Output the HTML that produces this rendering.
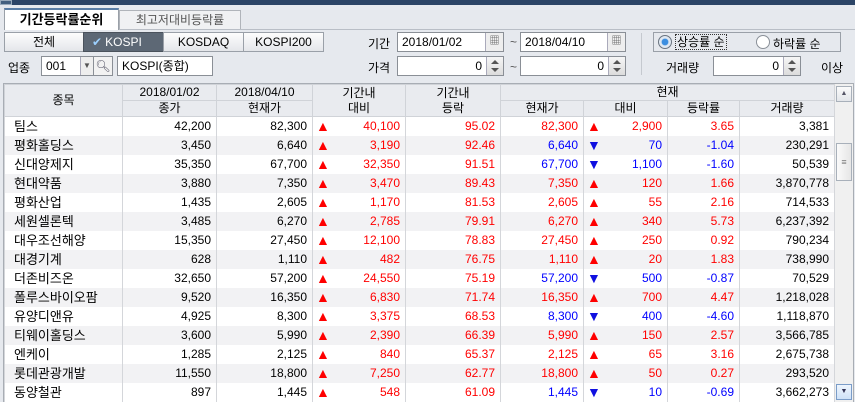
<!DOCTYPE html>
<html><head><meta charset="utf-8"><style>
*{box-sizing:border-box;margin:0;padding:0}
body{width:855px;height:402px;overflow:hidden;background:#e6e9ee;font-family:"Liberation Sans","Noto Sans CJK KR",sans-serif;font-size:12px;color:#000;position:relative}
.a{position:absolute}
.inp{position:absolute;background:#fff;border:1px solid #8a8f96;height:20px;line-height:18px;padding:0 4px}
.btn{position:absolute;top:32px;height:20px;line-height:18px;text-align:center;border:1px solid #9aa0a8;background:linear-gradient(#fdfdfd,#e4e6ea);font-size:12px}
.sp{position:absolute;width:17px;height:18px;top:0;right:0;border-left:1px solid #aab;background:linear-gradient(#f6f6f6,#dcdcdc)}
.sp:before{content:"";position:absolute;left:4px;top:3px;border:4px solid transparent;border-bottom:4px solid #555;border-top:0}
.sp:after{content:"";position:absolute;left:4px;top:11px;border:4px solid transparent;border-top:4px solid #555;border-bottom:0}
.cal{position:absolute;right:0;top:0;width:18px;height:18px;border-left:1px solid #aab;background:#eee;text-align:center;font-size:10px;color:#555;line-height:18px}
table{position:absolute;left:4px;top:84px;border-collapse:collapse;table-layout:fixed;font-size:12px}
th{background:#e9ebef;font-weight:normal;height:16px;line-height:15px;border:1px solid #d0d3d8;padding:0}
td{height:19px;line-height:19px;text-align:right;padding:0 5px 0 0;border-left:1px solid #d4d6da;border-right:1px solid #d4d6da;white-space:nowrap}
tr:nth-child(even) td{background:#f2f2f4}
tr:nth-child(odd) td{background:#fff}
td.n{text-align:left;padding-left:9px;font-size:13px}
.r{color:#f00}.b{color:#0000ff}
.u,.d{float:left;margin-left:3px;font-size:14px}
.u{color:#f00}.d{color:#1010e0}
</style></head><body>
<div class="a" style="left:0;top:0;width:855px;height:5px;background:#2b4466"></div>
<div class="a" style="left:0;top:0;width:12px;height:5px;border:1px solid #9ab;background:#44607f"></div>
<div class="a" style="left:4px;top:29px;width:851px;height:1px;background:#b9bec6"></div>
<div class="a" style="left:4px;top:8px;width:115px;height:22px;background:#fff;border:1px solid #9aa0a8;border-top:2px solid #5a7ea6;border-bottom:none;text-align:center;line-height:19px;font-weight:bold;font-size:13px">기간등락률순위</div>
<div class="a" style="left:119px;top:10px;width:122px;height:19px;background:#f0f1f3;border:1px solid #b0b4ba;border-bottom:none;text-align:center;line-height:18px;color:#555;font-size:12px">최고저대비등락률</div>

<div class="btn" style="left:4px;width:80px">전체</div>
<div class="btn" style="left:83px;width:81px;background:#5d6875;color:#fff;border-color:#4a525c"><span style="color:#9cd0ff;position:absolute;left:8px">✔</span>KOSPI</div>
<div class="btn" style="left:163px;width:81px">KOSDAQ</div>
<div class="btn" style="left:243px;width:81px">KOSPI200</div>

<div class="a" style="left:368px;top:35px">기간</div>
<div class="inp" style="left:397px;top:32px;width:107px">2018/01/02<div class="cal">▦</div></div>
<div class="a" style="left:510px;top:35px;color:#555">~</div>
<div class="inp" style="left:520px;top:32px;width:106px">2018/04/10<div class="cal">▦</div></div>
<div class="a" style="left:641px;top:33px;width:1px;height:42px;background:#c5c9cf"></div>
<div class="a" style="left:653px;top:32px;width:188px;height:20px;border:1px solid #9aa0a8"></div>
<div class="a" style="left:658px;top:35px;width:14px;height:14px;border-radius:50%;border:1px solid #6a7480;background:radial-gradient(#3b8ee0 35%,#dfe8f2 45%)"></div>
<div class="a" style="left:675px;top:34px;border:1px dotted #333;padding:0 1px;line-height:14px">상승률 순</div>
<div class="a" style="left:756px;top:35px;width:14px;height:14px;border-radius:50%;border:1px solid #8a9098;background:#fff"></div>
<div class="a" style="left:773px;top:35px">하락률 순</div>

<div class="a" style="left:8px;top:59px">업종</div>
<div class="inp" style="left:41px;top:56px;width:53px">001</div>
<div class="a" style="left:80px;top:57px;width:13px;height:18px;background:#eee;border-left:1px solid #aab;font-size:8px;text-align:center;line-height:18px;color:#555">▼</div>
<div class="a" style="left:93px;top:56px;width:20px;height:20px;border:1px solid #8a8f96;background:#f2f2f2;text-align:center;line-height:18px;color:#556">🔍︎</div>
<div class="inp" style="left:117px;top:56px;width:96px">KOSPI(종합)</div>

<div class="a" style="left:368px;top:59px">가격</div>
<div class="inp" style="left:397px;top:56px;width:107px;text-align:right;padding-right:21px">0<div class="sp"></div></div>
<div class="a" style="left:510px;top:60px;color:#555">~</div>
<div class="inp" style="left:520px;top:56px;width:106px;text-align:right;padding-right:21px">0<div class="sp"></div></div>
<div class="a" style="left:666px;top:59px">거래량</div>
<div class="inp" style="left:713px;top:56px;width:88px;text-align:right;padding-right:21px">0<div class="sp"></div></div>
<div class="a" style="left:821px;top:59px">이상</div>

<div class="a" style="left:3px;top:83px;width:851px;height:319px;border:1px solid #a8adb4;background:#fff"></div>
<table>
<colgroup><col style="width:118px"><col style="width:94px"><col style="width:96px"><col style="width:93px"><col style="width:95px"><col style="width:83px"><col style="width:84px"><col style="width:72px"><col style="width:95px"></colgroup>
<tr><th rowspan="2">종목</th><th>2018/01/02</th><th>2018/04/10</th><th rowspan="2">기간내<br>대비</th><th rowspan="2">기간내<br>등락</th><th colspan="4">현재</th></tr>
<tr><th>종가</th><th>현재가</th><th>현재가</th><th>대비</th><th>등락률</th><th>거래량</th></tr>
<tr><td class="n">팀스</td><td>42,200</td><td>82,300</td><td class="r"><span class="u">▲</span>40,100</td><td class="r">95.02</td><td class="r">82,300</td><td class="r"><span class="u">▲</span>2,900</td><td class="r">3.65</td><td>3,381</td></tr>
<tr><td class="n">평화홀딩스</td><td>3,450</td><td>6,640</td><td class="r"><span class="u">▲</span>3,190</td><td class="r">92.46</td><td class="b">6,640</td><td class="b"><span class="d">▼</span>70</td><td class="b">-1.04</td><td>230,291</td></tr>
<tr><td class="n">신대양제지</td><td>35,350</td><td>67,700</td><td class="r"><span class="u">▲</span>32,350</td><td class="r">91.51</td><td class="b">67,700</td><td class="b"><span class="d">▼</span>1,100</td><td class="b">-1.60</td><td>50,539</td></tr>
<tr><td class="n">현대약품</td><td>3,880</td><td>7,350</td><td class="r"><span class="u">▲</span>3,470</td><td class="r">89.43</td><td class="r">7,350</td><td class="r"><span class="u">▲</span>120</td><td class="r">1.66</td><td>3,870,778</td></tr>
<tr><td class="n">평화산업</td><td>1,435</td><td>2,605</td><td class="r"><span class="u">▲</span>1,170</td><td class="r">81.53</td><td class="r">2,605</td><td class="r"><span class="u">▲</span>55</td><td class="r">2.16</td><td>714,533</td></tr>
<tr><td class="n">세원셀론텍</td><td>3,485</td><td>6,270</td><td class="r"><span class="u">▲</span>2,785</td><td class="r">79.91</td><td class="r">6,270</td><td class="r"><span class="u">▲</span>340</td><td class="r">5.73</td><td>6,237,392</td></tr>
<tr><td class="n">대우조선해양</td><td>15,350</td><td>27,450</td><td class="r"><span class="u">▲</span>12,100</td><td class="r">78.83</td><td class="r">27,450</td><td class="r"><span class="u">▲</span>250</td><td class="r">0.92</td><td>790,234</td></tr>
<tr><td class="n">대경기계</td><td>628</td><td>1,110</td><td class="r"><span class="u">▲</span>482</td><td class="r">76.75</td><td class="r">1,110</td><td class="r"><span class="u">▲</span>20</td><td class="r">1.83</td><td>738,990</td></tr>
<tr><td class="n">더존비즈온</td><td>32,650</td><td>57,200</td><td class="r"><span class="u">▲</span>24,550</td><td class="r">75.19</td><td class="b">57,200</td><td class="b"><span class="d">▼</span>500</td><td class="b">-0.87</td><td>70,529</td></tr>
<tr><td class="n">폴루스바이오팜</td><td>9,520</td><td>16,350</td><td class="r"><span class="u">▲</span>6,830</td><td class="r">71.74</td><td class="r">16,350</td><td class="r"><span class="u">▲</span>700</td><td class="r">4.47</td><td>1,218,028</td></tr>
<tr><td class="n">유양디앤유</td><td>4,925</td><td>8,300</td><td class="r"><span class="u">▲</span>3,375</td><td class="r">68.53</td><td class="b">8,300</td><td class="b"><span class="d">▼</span>400</td><td class="b">-4.60</td><td>1,118,870</td></tr>
<tr><td class="n">티웨이홀딩스</td><td>3,600</td><td>5,990</td><td class="r"><span class="u">▲</span>2,390</td><td class="r">66.39</td><td class="r">5,990</td><td class="r"><span class="u">▲</span>150</td><td class="r">2.57</td><td>3,566,785</td></tr>
<tr><td class="n">엔케이</td><td>1,285</td><td>2,125</td><td class="r"><span class="u">▲</span>840</td><td class="r">65.37</td><td class="r">2,125</td><td class="r"><span class="u">▲</span>65</td><td class="r">3.16</td><td>2,675,738</td></tr>
<tr><td class="n">롯데관광개발</td><td>11,550</td><td>18,800</td><td class="r"><span class="u">▲</span>7,250</td><td class="r">62.77</td><td class="r">18,800</td><td class="r"><span class="u">▲</span>50</td><td class="r">0.27</td><td>293,520</td></tr>
<tr><td class="n">동양철관</td><td>897</td><td>1,445</td><td class="r"><span class="u">▲</span>548</td><td class="r">61.09</td><td class="b">1,445</td><td class="b"><span class="d">▼</span>10</td><td class="b">-0.69</td><td>3,662,273</td></tr>
</table>
<div class="a" style="left:834px;top:84px;width:19px;height:318px;background:#f0f0f0;border-left:1px solid #d4d6da"></div>
<div class="a" style="left:836px;top:86px;width:16px;height:16px;border:1px solid #a8b0ba;background:linear-gradient(#fbfbfb,#e3e6ea);font-size:7px;text-align:center;line-height:14px;color:#556">▲</div>
<div class="a" style="left:836px;top:143px;width:16px;height:38px;border:1px solid #a8b0ba;background:linear-gradient(90deg,#fafafa,#e6e6e6);font-size:9px;text-align:center;line-height:36px;color:#777">≡</div>
<div class="a" style="left:836px;top:384px;width:16px;height:16px;border:1px solid #7a9cc8;background:linear-gradient(#eef5fd,#cfe2f8);font-size:7px;text-align:center;line-height:14px;color:#335">▼</div>
</body></html>
